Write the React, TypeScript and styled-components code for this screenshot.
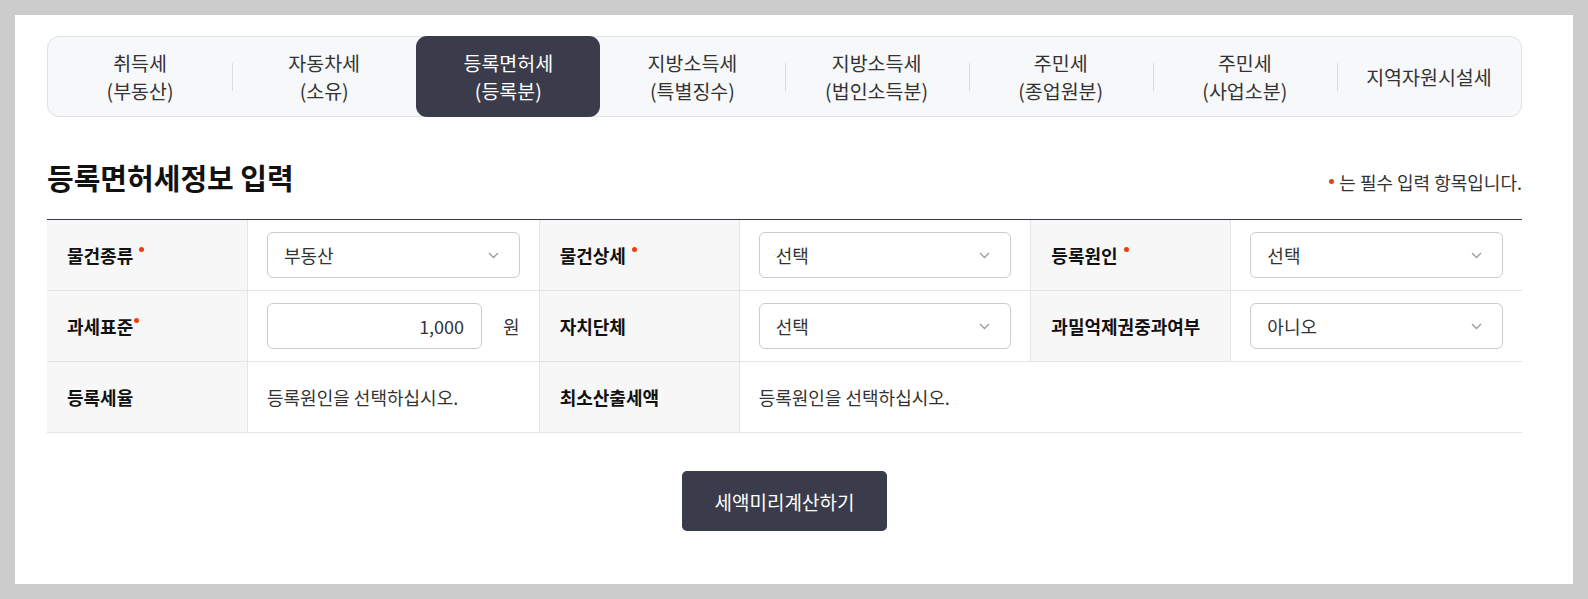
import React from 'react';
import styled, { createGlobalStyle } from 'styled-components';

const GlobalStyle = createGlobalStyle`
  html, body {
    margin: 0;
    padding: 0;
    background: #cccccc;
  }
  * {
    box-sizing: border-box;
  }
  body {
    font-family: "Noto Sans CJK KR", "Noto Sans", sans-serif;
    color: #333;
  }
`;

const Page = styled.div`
  padding: 15px;
`;

const Panel = styled.div`
  background: #ffffff;
  height: 569px;
  padding: 21px 51px 0 32px;
`;

const TabList = styled.div`
  display: flex;
  height: 81px;
  border: 1px solid #dfe1e5;
  border-radius: 12px;
  background: #f7f8fa;
`;

const Tab = styled.button<{ $active?: boolean; $sep?: boolean }>`
  position: relative;
  flex: 1;
  display: flex;
  align-items: center;
  justify-content: center;
  border: none;
  padding: 0;
  margin: ${(p) => (p.$active ? '-1px 0' : '0')};
  border-radius: 11px;
  background: ${(p) => (p.$active ? '#3b3c4b' : 'transparent')};
  color: ${(p) => (p.$active ? '#ffffff' : '#333333')};
  font-family: inherit;
  font-size: 19.5px;
  line-height: 28px;
  text-align: center;
  white-space: pre-line;
  cursor: pointer;

  &::before {
    content: '';
    display: ${(p) => (p.$sep ? 'block' : 'none')};
    position: absolute;
    left: 0;
    top: 50%;
    width: 1px;
    height: 28px;
    margin-top: -14px;
    background: #dddddd;
  }
`;

const Header = styled.div`
  display: flex;
  align-items: center;
  justify-content: space-between;
  padding: 41px 0 22px;
  border-bottom: 1px solid #3a3b48;
`;

const Title = styled.h2`
  margin: 0;
  font-size: 29px;
  line-height: 39px;
  font-weight: 700;
  color: #111;
`;

const Note = styled.p`
  margin: 0;
  padding-top: 8px;
  display: flex;
  align-items: center;
  font-size: 18px;
  line-height: 26px;
  color: #333;
`;

const Dot = styled.span`
  display: inline-block;
  width: 5px;
  height: 5px;
  border-radius: 50%;
  background: #e8400c;
  margin-right: 5px;
`;

const LabelDot = styled(Dot)<{ $gap: number }>`
  align-self: flex-start;
  margin: 5px 0 0 ${(p) => p.$gap}px;
`;

const Grid = styled.div`
  display: grid;
  grid-template-columns: 200px minmax(0, 1fr) 200px minmax(0, 1fr) 200px minmax(0, 1fr);
`;

const Cell = styled.div<{ $label?: boolean; $first?: boolean; $span?: number }>`
  display: flex;
  align-items: center;
  min-width: 0;
  min-height: 71px;
  padding: 12px 19px 12px ${(p) => (p.$label ? '20px' : '19px')};
  background: ${(p) => (p.$label ? '#f7f7f7' : '#ffffff')};
  border-bottom: 1px solid #e5e5e5;
  border-left: ${(p) => (p.$first ? 'none' : '1px solid #e5e5e5')};
  grid-column: ${(p) => (p.$span ? `span ${p.$span}` : 'auto')};
  font-size: 18px;
  color: #333;
`;

const Label = styled.span`
  display: flex;
  align-items: center;
  font-size: 18px;
  line-height: 26px;
  font-weight: 700;
  color: #111;
`;

const SelectBox = styled.div`
  flex: 1;
  display: flex;
  align-items: center;
  justify-content: space-between;
  height: 46px;
  padding: 0 20px 0 16px;
  border: 1px solid #cccccc;
  border-radius: 6px;
  background: #fff;
  font-size: 18px;
  color: #333;
  cursor: pointer;
`;

const Amount = styled.div`
  flex: 1;
  min-width: 0;
  display: flex;
  align-items: center;
  gap: 21px;
`;

const Input = styled.input`
  flex: 1;
  width: 0;
  min-width: 0;
  height: 46px;
  padding: 0 17px;
  border: 1px solid #cccccc;
  border-radius: 6px;
  font-family: inherit;
  font-size: 18px;
  color: #333;
  text-align: right;
  outline: none;
`;

const Actions = styled.div`
  display: flex;
  justify-content: center;
  padding-top: 38px;
`;

const SubmitButton = styled.button`
  height: 60px;
  padding: 0 33px;
  border: none;
  border-radius: 5px;
  background: #3b3c4b;
  color: #fff;
  font-family: inherit;
  font-size: 19px;
  cursor: pointer;
`;

const tabs = [
  '취득세\n(부동산)',
  '자동차세\n(소유)',
  '등록면허세\n(등록분)',
  '지방소득세\n(특별징수)',
  '지방소득세\n(법인소득분)',
  '주민세\n(종업원분)',
  '주민세\n(사업소분)',
  '지역자원시설세',
];

const Chevron = () => (
  <svg width="11" height="7" viewBox="0 0 11 7" fill="none">
    <polyline points="1,1 5.5,5.5 10,1" stroke="#9a9a9a" strokeWidth="1.3" />
  </svg>
);

const Select: React.FC<{ value: string }> = ({ value }) => (
  <SelectBox>
    <span>{value}</span>
    <Chevron />
  </SelectBox>
);

const Required: React.FC<{ text: string; gap?: number }> = ({ text, gap = 6 }) => (
  <Label>
    {text}
    <LabelDot $gap={gap} />
  </Label>
);

const App: React.FC = () => {
  const active = 2;
  return (
    <>
      <GlobalStyle />
      <Page>
        <Panel>
          <TabList>
            {tabs.map((t, i) => (
              <Tab key={i} $active={i === active} $sep={i > 0 && i !== active && i - 1 !== active}>
                {t}
              </Tab>
            ))}
          </TabList>

          <Header>
            <Title>등록면허세정보 입력</Title>
            <Note>
              <Dot />
              는 필수 입력 항목입니다.
            </Note>
          </Header>

          <Grid>
            <Cell $label $first>
              <Required text="물건종류" />
            </Cell>
            <Cell>
              <Select value="부동산" />
            </Cell>
            <Cell $label>
              <Required text="물건상세" />
            </Cell>
            <Cell>
              <Select value="선택" />
            </Cell>
            <Cell $label>
              <Required text="등록원인" />
            </Cell>
            <Cell>
              <Select value="선택" />
            </Cell>

            <Cell $label $first>
              <Required text="과세표준" gap={1} />
            </Cell>
            <Cell>
              <Amount>
                <Input defaultValue="1,000" />
                <span>원</span>
              </Amount>
            </Cell>
            <Cell $label>
              <Label>자치단체</Label>
            </Cell>
            <Cell>
              <Select value="선택" />
            </Cell>
            <Cell $label>
              <Label>과밀억제권중과여부</Label>
            </Cell>
            <Cell>
              <Select value="아니오" />
            </Cell>

            <Cell $label $first>
              <Label>등록세율</Label>
            </Cell>
            <Cell>등록원인을 선택하십시오.</Cell>
            <Cell $label>
              <Label>최소산출세액</Label>
            </Cell>
            <Cell $span={3}>등록원인을 선택하십시오.</Cell>
          </Grid>

          <Actions>
            <SubmitButton>세액미리계산하기</SubmitButton>
          </Actions>
        </Panel>
      </Page>
    </>
  );
};

export default App;
